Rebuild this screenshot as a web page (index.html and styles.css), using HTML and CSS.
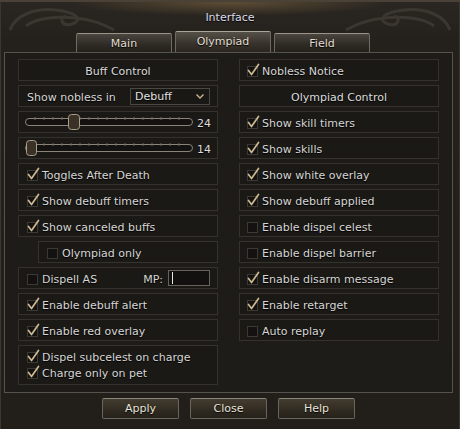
FILE: index.html
```html
<!DOCTYPE html>
<html>
<head>
<meta charset="utf-8">
<link rel="stylesheet" href="styles.css">
</head>
<body>
<div class="window">
  <div class="title">
    <svg class="orn orn-l" width="110" height="30" viewBox="0 0 110 30"><path d="M4 28 C10 12 30 6 50 8 C70 10 78 18 66 22 C56 25 52 16 60 14" /><path d="M20 24 C30 16 50 14 70 16 C90 18 100 24 108 28" /></svg>
    <span class="title-text">Interface</span>
    <svg class="orn orn-r" width="110" height="30" viewBox="0 0 110 30"><path d="M106 28 C100 12 80 6 60 8 C40 10 32 18 44 22 C54 25 58 16 50 14" /><path d="M90 24 C80 16 60 14 40 16 C20 18 10 24 2 28" /></svg>
  </div>
  <div class="tabs">
    <div class="tab">Main</div>
    <div class="tab active">Olympiad</div>
    <div class="tab">Field</div>
  </div>
  <div class="panel">
    <div class="col">
      <div class="row header">Buff Control</div>
      <div class="row">
        <span class="lbl nob">Show nobless in</span>
        <div class="select"><span>Debuff</span><svg width="8" height="5" viewBox="0 0 8 5"><path d="M0.5 0.5 L4 4 L7.5 0.5" class="chev"/></svg></div>
      </div>
      <div class="row slider-row">
        <svg class="slider" width="168" height="18" viewBox="0 0 168 18">
          <rect x="0.5" y="5.5" width="167" height="7" rx="3.5" class="track"/>
          <path class="ticks" d="M10 4v3M19 4v3M28 4v3M37 4v3M46 4v3M55 4v3M64 4v3M73 4v3M82 4v3M91 4v3M100 4v3M109 4v3M118 4v3M127 4v3M136 4v3M145 4v3M154 4v3"/>
          <rect x="43.5" y="1.5" width="11" height="15" rx="3" class="thumb"/>
        </svg>
        <span class="val">24</span>
      </div>
      <div class="row slider-row">
        <svg class="slider" width="168" height="18" viewBox="0 0 168 18">
          <rect x="0.5" y="5.5" width="167" height="7" rx="3.5" class="track"/>
          <path class="ticks" d="M10 4v3M19 4v3M28 4v3M37 4v3M46 4v3M55 4v3M64 4v3M73 4v3M82 4v3M91 4v3M100 4v3M109 4v3M118 4v3M127 4v3M136 4v3M145 4v3M154 4v3"/>
          <rect x="1.5" y="1.5" width="10" height="15" rx="3" class="thumb"/>
        </svg>
        <span class="val">14</span>
      </div>
      <div class="row chk"><svg class="cb" width="14" height="14" viewBox="0 0 14 14"><rect x="0.5" y="3.5" width="10" height="10" class="box"/><path d="M1.5 7.5 L4.5 11.5 L11.5 1.5" class="tick"/></svg><span>Toggles After Death</span></div>
      <div class="row chk"><svg class="cb" width="14" height="14" viewBox="0 0 14 14"><rect x="0.5" y="3.5" width="10" height="10" class="box"/><path d="M1.5 7.5 L4.5 11.5 L11.5 1.5" class="tick"/></svg><span>Show debuff timers</span></div>
      <div class="row chk"><svg class="cb" width="14" height="14" viewBox="0 0 14 14"><rect x="0.5" y="3.5" width="10" height="10" class="box"/><path d="M1.5 7.5 L4.5 11.5 L11.5 1.5" class="tick"/></svg><span>Show canceled buffs</span></div>
      <div class="row chk indent"><svg class="cb" width="14" height="14" viewBox="0 0 14 14"><rect x="0.5" y="3.5" width="10" height="10" class="box"/></svg><span>Olympiad only</span></div>
      <div class="row chk"><svg class="cb" width="14" height="14" viewBox="0 0 14 14"><rect x="0.5" y="3.5" width="10" height="10" class="box"/></svg><span class="grow">Dispell AS</span><span class="mp">MP:</span><div class="input"><span class="caret"></span></div></div>
      <div class="row chk"><svg class="cb" width="14" height="14" viewBox="0 0 14 14"><rect x="0.5" y="3.5" width="10" height="10" class="box"/><path d="M1.5 7.5 L4.5 11.5 L11.5 1.5" class="tick"/></svg><span>Enable debuff alert</span></div>
      <div class="row chk"><svg class="cb" width="14" height="14" viewBox="0 0 14 14"><rect x="0.5" y="3.5" width="10" height="10" class="box"/><path d="M1.5 7.5 L4.5 11.5 L11.5 1.5" class="tick"/></svg><span>Enable red overlay</span></div>
      <div class="row group">
        <div class="gline"><svg class="cb" width="14" height="14" viewBox="0 0 14 14"><rect x="0.5" y="3.5" width="10" height="10" class="box"/><path d="M1.5 7.5 L4.5 11.5 L11.5 1.5" class="tick"/></svg><span>Dispel subcelest on charge</span></div>
        <div class="gline"><svg class="cb" width="14" height="14" viewBox="0 0 14 14"><rect x="0.5" y="3.5" width="10" height="10" class="box"/><path d="M1.5 7.5 L4.5 11.5 L11.5 1.5" class="tick"/></svg><span>Charge only on pet</span></div>
      </div>
    </div>
    <div class="col">
      <div class="row chk r"><svg class="cb" width="14" height="14" viewBox="0 0 14 14"><rect x="0.5" y="3.5" width="10" height="10" class="box"/><path d="M1.5 7.5 L4.5 11.5 L11.5 1.5" class="tick"/></svg><span>Nobless Notice</span></div>
      <div class="row header">Olympiad Control</div>
      <div class="row chk r"><svg class="cb" width="14" height="14" viewBox="0 0 14 14"><rect x="0.5" y="3.5" width="10" height="10" class="box"/><path d="M1.5 7.5 L4.5 11.5 L11.5 1.5" class="tick"/></svg><span>Show skill timers</span></div>
      <div class="row chk r"><svg class="cb" width="14" height="14" viewBox="0 0 14 14"><rect x="0.5" y="3.5" width="10" height="10" class="box"/><path d="M1.5 7.5 L4.5 11.5 L11.5 1.5" class="tick"/></svg><span>Show skills</span></div>
      <div class="row chk r"><svg class="cb" width="14" height="14" viewBox="0 0 14 14"><rect x="0.5" y="3.5" width="10" height="10" class="box"/><path d="M1.5 7.5 L4.5 11.5 L11.5 1.5" class="tick"/></svg><span>Show white overlay</span></div>
      <div class="row chk r"><svg class="cb" width="14" height="14" viewBox="0 0 14 14"><rect x="0.5" y="3.5" width="10" height="10" class="box"/><path d="M1.5 7.5 L4.5 11.5 L11.5 1.5" class="tick"/></svg><span>Show debuff applied</span></div>
      <div class="row chk r"><svg class="cb" width="14" height="14" viewBox="0 0 14 14"><rect x="0.5" y="3.5" width="10" height="10" class="box"/></svg><span>Enable dispel celest</span></div>
      <div class="row chk r"><svg class="cb" width="14" height="14" viewBox="0 0 14 14"><rect x="0.5" y="3.5" width="10" height="10" class="box"/></svg><span>Enable dispel barrier</span></div>
      <div class="row chk r"><svg class="cb" width="14" height="14" viewBox="0 0 14 14"><rect x="0.5" y="3.5" width="10" height="10" class="box"/><path d="M1.5 7.5 L4.5 11.5 L11.5 1.5" class="tick"/></svg><span>Enable disarm message</span></div>
      <div class="row chk r"><svg class="cb" width="14" height="14" viewBox="0 0 14 14"><rect x="0.5" y="3.5" width="10" height="10" class="box"/><path d="M1.5 7.5 L4.5 11.5 L11.5 1.5" class="tick"/></svg><span>Enable retarget</span></div>
      <div class="row chk r"><svg class="cb" width="14" height="14" viewBox="0 0 14 14"><rect x="0.5" y="3.5" width="10" height="10" class="box"/></svg><span>Auto replay</span></div>
    </div>
  </div>
  <div class="buttons">
    <div class="btn">Apply</div>
    <div class="btn">Close</div>
    <div class="btn">Help</div>
  </div>
</div>
</body>
</html>
```
FILE: styles.css
```css
* { box-sizing: border-box; }
html, body { margin: 0; padding: 0; background: #1f1c18; }
body { width: 460px; height: 429px; overflow: hidden; font-family: "DejaVu Sans", Verdana, sans-serif; font-size: 11px; color: #d6d6d4; }
.window {
  width: 460px; height: 429px;
  display: flex; flex-direction: column;
  background: linear-gradient(#2a2621 0px, #24211d 40px, #221f1b 100%);
  border-top: 2px solid #4a4236;
  box-shadow: inset 1px 0 0 #3a3630, inset -1px 0 0 #3a3630;
}
.title {
  height: 29px;
  display: flex; align-items: center; justify-content: center;
  position: relative;
  background: radial-gradient(ellipse 160px 14px at 50% 0, rgba(190,150,90,0.35), rgba(0,0,0,0));
}
.title-text { color: #dcdce8; text-shadow: 0 1px 1px #000; padding-top: 2px; }
.orn { position: absolute; top: 0; }
.orn path { fill: none; stroke: #3b3630; stroke-width: 3; }
.orn-l { left: 6px; }
.orn-r { right: 6px; }
.tabs {
  height: 21px;
  display: flex; align-items: flex-end; gap: 3px;
  padding-left: 76px;
}
.tab {
  width: 96px; height: 19px;
  display: flex; align-items: center; justify-content: center;
  color: #e2ded2; text-shadow: 0 1px 1px #000;
  background: linear-gradient(#4a453d, #2e2a24 60%, #24211c);
  border: 1px solid #6e6a62; border-top-color: #9a958a; border-bottom: none;
  border-radius: 2px 2px 0 0;
  padding-top: 1px;
}
.tab.active {
  height: 21px;
  background: linear-gradient(#555047, #37322b 60%, #2a2620);
  border-top-color: #aaa59a;
  padding-top: 0; padding-bottom: 2px;
}
.panel {
  margin: 0 7px 0 4px;
  height: 341px;
  border: 1px solid #56534e;
  background: #1e1c19;
  display: flex; gap: 21px;
  padding: 6px 13px 0 13px;
}
.col { width: 200px; display: flex; flex-direction: column; gap: 4px; }
.row {
  height: 22px;
  border: 1px solid #35322e;
  background: #1b1916;
  display: flex; align-items: center;
  padding-top: 2px;
  text-shadow: 0 1px 1px #000;
}
.header { justify-content: center; color: #dcdcdc; }
.nob { padding-left: 8px; width: 111px; }
.select {
  width: 80px; height: 17px; margin-top: -2px;
  border: 1px solid #4a4843;
  background: #1a1815;
  display: flex; align-items: center; justify-content: space-between;
  padding: 1px 5px 0 4px;
  color: #e0e0e0;
}
.chev { fill: none; stroke: #c8b48a; stroke-width: 1.4; }
.slider-row { padding-left: 6px; padding-top: 0; }
.slider { display: block; }
.track { fill: #141210; stroke: #8a8478; stroke-width: 1; }
.ticks { stroke: #6a655c; stroke-width: 1; }
.thumb { fill: #3a3226; stroke: #a89e8a; stroke-width: 1; }
.val { margin-left: 4px; color: #dcdcdc; padding-top: 2px; }
.chk { padding-left: 8px; }
.chk.r { padding-left: 7px; }
.cb { flex: none; margin-right: 1px; margin-top: -3px; }
.box { fill: #141210; stroke: #3c3934; stroke-width: 1; }
.tick { fill: none; stroke: #cdb992; stroke-width: 1.7; stroke-linecap: round; stroke-linejoin: round; }
.indent { margin-left: 20px; }
.grow { flex: 1; }
.mp { margin-right: 5px; }
.input {
  width: 42px; height: 16px; margin-right: 7px; margin-top: -2px;
  border: 1px solid #67645e; background: #121110;
  display: flex; align-items: center; padding-left: 3px;
}
.caret { width: 1px; height: 12px; background: #e8e8e8; }
.group {
  height: 40px;
  flex-direction: column; align-items: flex-start; justify-content: center;
  padding-left: 8px; padding-top: 1px; gap: 0;
}
.gline { display: flex; align-items: center; height: 16px; }
.buttons {
  display: flex; gap: 11px;
  padding-left: 102px; margin-top: 5px;
}
.btn {
  width: 77px; height: 21px;
  display: flex; align-items: center; justify-content: center;
  color: #e8e4d8; text-shadow: 0 1px 1px #000;
  background: linear-gradient(#433c30, #2d281f 70%, #25211a);
  border: 1px solid #6a665e; border-top-color: #8a857a;
  border-radius: 2px;
}
```
